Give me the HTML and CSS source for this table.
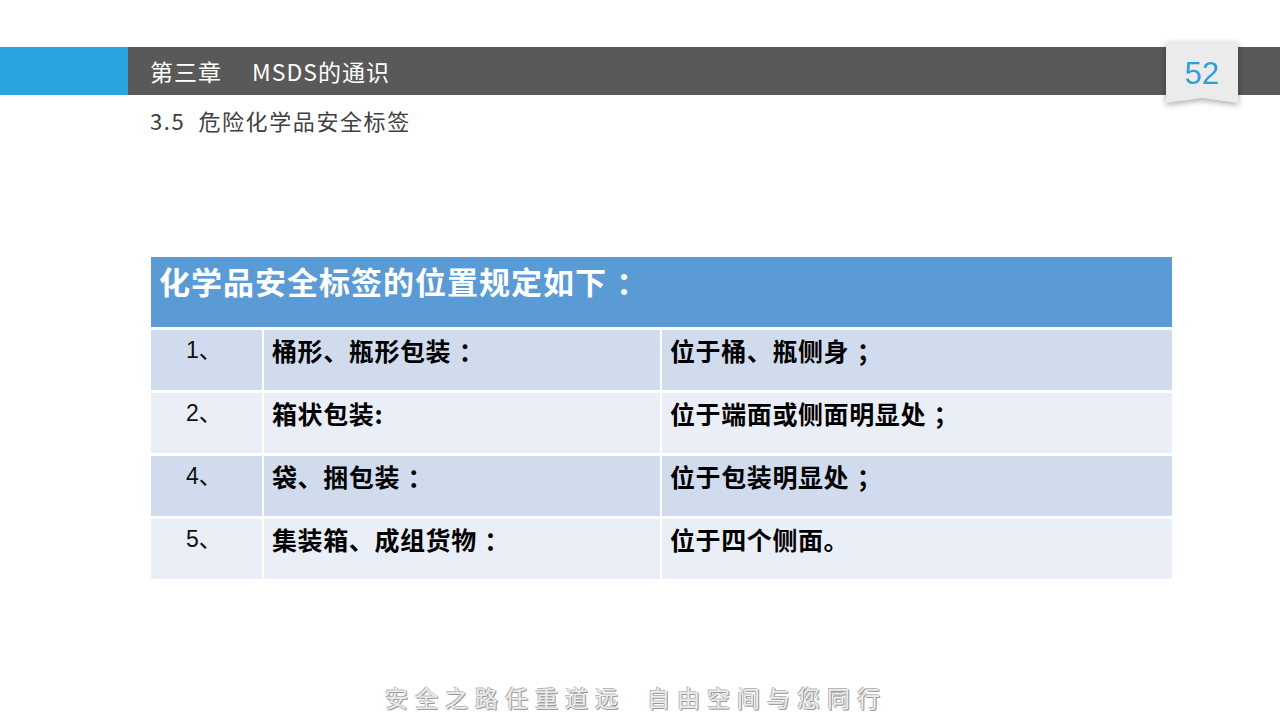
FILE: index.html
```html
<!DOCTYPE html>
<html lang="zh-CN">
<head>
<meta charset="utf-8">
<title>MSDS的通识</title>
<link rel="stylesheet" href="styles.css">
</head>
<body>
<div class="slide">
  <header class="topbar">
    <div class="topbar-accent"></div>
    <div class="topbar-main">
      <span class="chapter">第三章</span><span class="chapter-title">MSDS的通识</span>
    </div>
  </header>
  <div class="page-badge"><span>52</span></div>
  <div class="subtitle">3.5&nbsp;&nbsp;危险化学品安全标签</div>

  <div class="table">
    <div class="cell head">化学品安全标签的位置规定如下<span class="p">：</span></div>

    <div class="cell num dark">1、</div>
    <div class="cell txt dark">桶形、瓶形包装<span class="p">：</span></div>
    <div class="cell txt dark">位于桶、瓶侧身<span class="p">；</span></div>

    <div class="cell num light">2、</div>
    <div class="cell txt light">箱状包装:</div>
    <div class="cell txt light">位于端面或侧面明显处<span class="p">；</span></div>

    <div class="cell num dark">4、</div>
    <div class="cell txt dark">袋、捆包装<span class="p">：</span></div>
    <div class="cell txt dark">位于包装明显处<span class="p">；</span></div>

    <div class="cell num light">5、</div>
    <div class="cell txt light">集装箱、成组货物<span class="p">：</span></div>
    <div class="cell txt light">位于四个侧面。</div>
  </div>

  <footer class="motto"><span>安全之路任重道远</span><span>自由空间与您同行</span></footer>
</div>
</body>
</html>
```
FILE: styles.css
```css
* { box-sizing: border-box; }
html, body { margin: 0; padding: 0; }
body {
  background: #ffffff;
  font-family: "Noto Sans CJK SC", "Liberation Sans", sans-serif;
}
.slide {
  position: relative;
  width: 1280px;
  height: 720px;
  overflow: hidden;
  padding-top: 47px;
}
.topbar {
  display: flex;
  height: 48px;
}
.topbar-accent {
  width: 128px;
  background: #29a4de;
}
.topbar-main {
  flex: 1;
  background: #595959;
  color: #ffffff;
  display: flex;
  align-items: center;
  padding-left: 22px;
  font-size: 23px;
  letter-spacing: 1px;
}
.chapter { margin-right: 30px; }
.page-badge {
  position: absolute;
  left: 1166px;
  top: 42px;
  width: 72px;
  height: 61px;
  filter: drop-shadow(0 2px 3px rgba(0,0,0,0.35));
}
.page-badge span {
  display: flex;
  justify-content: center;
  align-items: center;
  width: 100%;
  height: 100%;
  padding-top: 2px;
  background: #ebebeb;
  clip-path: polygon(0 0, 100% 0, 100% 100%, 50% 92%, 0 100%);
  color: #2a9fd9;
  font-family: "Liberation Sans", Arial, sans-serif;
  font-size: 31px;
}
.subtitle {
  margin: 9px 0 0 150px;
  font-size: 22px;
  color: #404040;
  letter-spacing: 1.6px;
  line-height: 32px;
}
.table {
  margin: 121px 0 0 151px;
  width: 1021px;
  display: grid;
  grid-template-columns: 111px 396px 510px;
  grid-template-rows: 70px 60px 60px 60px 60px;
  column-gap: 2px;
  row-gap: 3px;
  background: #ffffff;
}
.cell { line-height: 1.3; text-spacing-trim: space-all; }
.p { margin-left: 0.3em; }
.head {
  grid-column: 1 / 4;
  background: #5b9bd5;
  color: #ffffff;
  font-weight: 700;
  font-size: 31px;
  padding: 4px 0 0 8px;
  letter-spacing: 1px;
}
.dark { background: #d0dbed; }
.light { background: #e9eef7; }
.num {
  font-family: "Liberation Sans", "Noto Sans CJK SC", sans-serif;
  font-size: 23px;
  color: #111111;
  padding: 6px 0 0 35px;
}
.txt {
  font-size: 25px;
  font-weight: 700;
  color: #000000;
  padding: 4px 0 0 8px;
  letter-spacing: 0.6px;
}
.motto {
  position: absolute;
  left: 385px;
  top: 680px;
  display: flex;
  gap: 22px;
  font-size: 23px;
  letter-spacing: 7px;
  color: #ececec;
  line-height: 34px;
  text-shadow: -1px -1px 0 #b8b8b8, 1px 1px 0 #9a9a9a, 1px 0 0 #c0c0c0, 0 1px 0 #c0c0c0;
}
```
